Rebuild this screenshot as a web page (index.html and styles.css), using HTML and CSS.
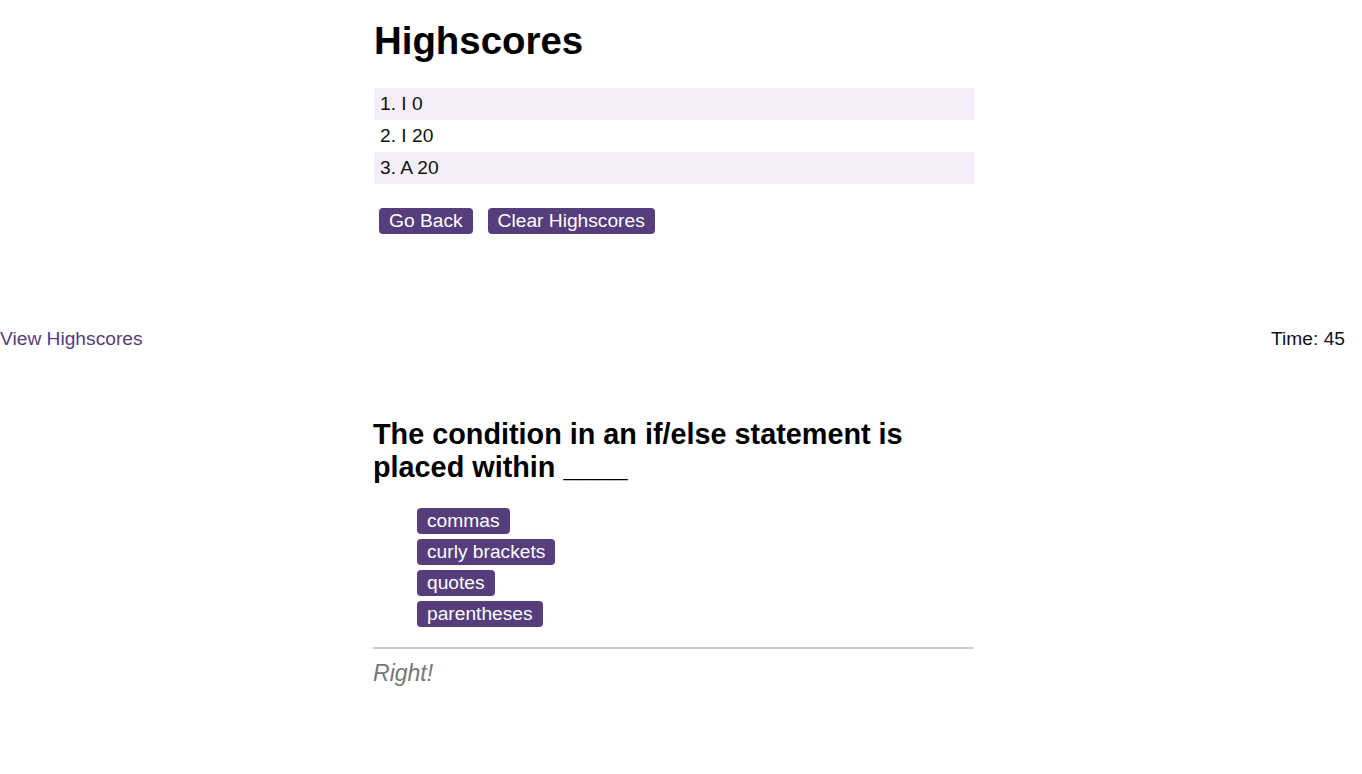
FILE: index.html
```html
<!DOCTYPE html>
<html lang="en">
<head>
<meta charset="utf-8">
<title>Code Quiz</title>
<link rel="stylesheet" href="styles.css">
</head>
<body>
  <section class="wrap scores">
    <h1 class="scores-title">Highscores</h1>
    <ol class="score-list">
      <li class="score-row">1. I 0</li>
      <li class="score-row">2. I 20</li>
      <li class="score-row">3. A 20</li>
    </ol>
    <div class="score-actions">
      <button class="btn">Go Back</button>
      <button class="btn">Clear Highscores</button>
    </div>
  </section>

  <header class="topbar">
    <a class="view-link" href="#">View Highscores</a>
    <span class="timer">Time: 45</span>
  </header>

  <main class="wrap quiz">
    <h2 class="question">The condition in an if/else statement is placed within ____</h2>
    <ul class="choices">
      <li><button class="btn">commas</button></li>
      <li><button class="btn">curly brackets</button></li>
      <li><button class="btn">quotes</button></li>
      <li><button class="btn">parentheses</button></li>
    </ul>
    <div class="feedback">
      <p class="feedback-text">Right!</p>
    </div>
  </main>
</body>
</html>
```

FILE: styles.css
```css
* {
  box-sizing: border-box;
}

body {
  margin: 0;
  font-family: "Liberation Sans", Arial, sans-serif;
  font-size: 19.2px;
  color: #111;
  background: #fff;
}

.wrap {
  width: 616px;
  margin: 0 auto;
  padding-right: 16px;
}

.scores {
  padding-left: 1px;
  padding-right: 15px;
}

.scores-title {
  margin: 19px 0 25px;
  font-size: 38.4px;
  line-height: 44px;
  font-weight: bold;
  color: #000;
}

.score-list {
  list-style: none;
  margin: 0;
  padding: 0;
}

.score-row {
  height: 32px;
  line-height: 32px;
  padding-left: 6px;
  font-size: 19.2px;
}

.score-row:nth-child(odd) {
  background: #f3eefa;
}

.score-actions {
  display: flex;
  gap: 15px;
  margin-top: 24px;
  padding-left: 5px;
}

.btn {
  display: inline-block;
  border: none;
  border-radius: 4px;
  background: #563d7c;
  color: #fff;
  font-family: inherit;
  font-size: 19.2px;
  line-height: 22px;
  padding: 2px 10px;
  cursor: pointer;
}

.topbar {
  display: flex;
  justify-content: space-between;
  align-items: center;
  margin-top: 94px;
  padding-right: 17px;
  font-size: 19.2px;
  line-height: 22px;
}

.view-link {
  color: #563d7c;
  text-decoration: none;
}

.timer {
  color: #111;
}

.question {
  margin: 68px 0 24px;
  font-size: 28.8px;
  line-height: 33px;
  font-weight: bold;
  color: #000;
}

.choices {
  list-style: none;
  margin: 0;
  padding: 0 0 0 44px;
  display: flex;
  flex-direction: column;
  align-items: flex-start;
  gap: 5px;
}

.feedback {
  margin-top: 20px;
  border-top: 2px solid #ccc;
}

.feedback-text {
  margin: 11px 0 0;
  font-size: 23.04px;
  line-height: 26px;
  font-style: italic;
  color: #777;
}
```
